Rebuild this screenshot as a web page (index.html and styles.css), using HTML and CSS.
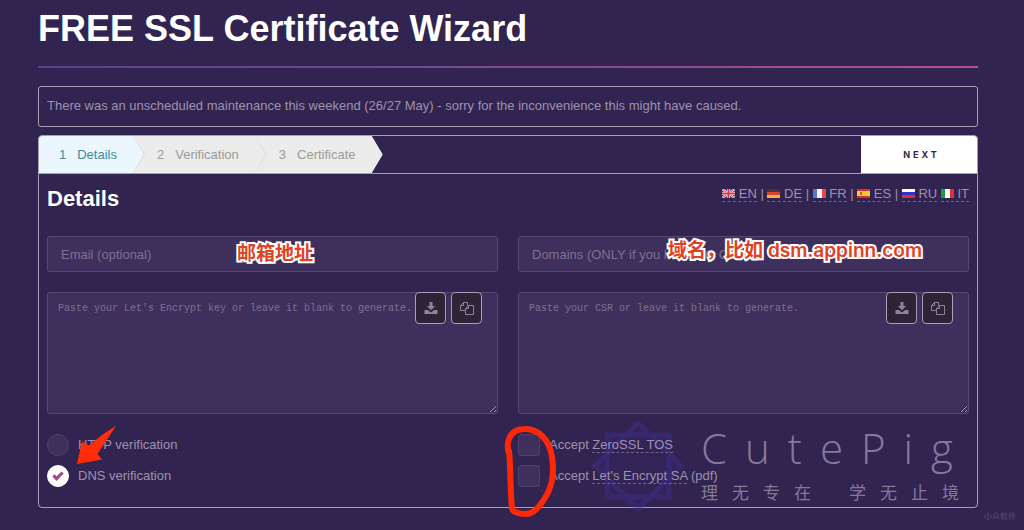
FILE: index.html
```html
<!DOCTYPE html>
<html lang="en">
<head>
	<meta charset="UTF-8">
	<title>FREE SSL Certificate Wizard</title>
	<link rel="stylesheet" href="styles.css">
</head>
<body>
	<svg class="sprite" width="0" height="0">
		<symbol id="download" viewBox="0 0 14 14">
			<path d="M5.5 1h3v4h2.7L7 9.2 2.800 5h2.700z"/>
			<path d="M.5 9h3.300L7 11.400 10.200 9h3.300v4H.5z"/>
		</symbol>
		<symbol id="copy" viewBox="0 0 14 14">
			<path fill="none" stroke="currentColor" d="M5.500 9.500h-5V4.500l3-3h4v3M3.500 1.500v3h-3M5.500 7.500l3-3h5v9h-8zM8.500 4.500v3h-3"/>
		</symbol>
	</svg>
	<main class="page">
		<h1>FREE SSL Certificate Wizard</h1>
		<p class="notice">There was an unscheduled maintenance this weekend (26/27 May) - sorry for the inconvenience this might have caused.</p>
		<form class="wizard">
			<div class="bar">
				<ol class="steps">
					<li class="on"><span>1</span>Details</li>
					<li><span>2</span>Verification</li>
					<li><span>3</span>Certificate</li>
				</ol>
				<button type="button" class="next">NEXT</button>
			</div>
			<div class="content">
				<div class="head">
					<h2>Details</h2>
					<nav class="langs">
						<a href="#en"><svg viewBox="0 0 13 9"><path fill="#3c4a94" d="M0 0h13v9H0z"/><path stroke="#fff" stroke-width="2" d="M0 0l13 9M13 0L0 9"/><path stroke="#d8485c" d="M0 0l13 9M13 0L0 9"/><path stroke="#fff" stroke-width="3" d="M6.500 0v9M0 4.500h13"/><path stroke="#d8304a" stroke-width="2" d="M6.500 0v9M0 4.500h13"/></svg> EN</a> |
						<a href="#de"><svg viewBox="0 0 13 9"><path fill="#4a3338" d="M0 0h13v3H0z"/><path fill="#d8432c" d="M0 3h13v3H0z"/><path fill="#f3b23c" d="M0 6h13v3H0z"/></svg> DE</a> |
						<a href="#fr"><svg viewBox="0 0 13 9"><path fill="#5878cc" d="M0 0h4v9H0z"/><path fill="#f2f2fa" d="M4 0h5v9H4z"/><path fill="#e5484a" d="M9 0h4v9H9z"/></svg> FR</a> |
						<a href="#es"><svg viewBox="0 0 13 9"><path fill="#dc2e24" d="M0 0h13v9H0z"/><path fill="#fbc832" d="M0 2h13v5H0z"/><path fill="#c8603c" d="M3 3h2v3H3z"/></svg> ES</a> |
						<a href="#ru"><svg viewBox="0 0 13 9"><path fill="#fff" d="M0 0h13v3H0z"/><path fill="#3038c0" d="M0 3h13v3H0z"/><path fill="#dc2c48" d="M0 6h13v3H0z"/></svg> RU</a>
						<a href="#it"><svg viewBox="0 0 13 9"><path fill="#1c9a3c" d="M0 0h4v9H0z"/><path fill="#fff" d="M4 0h5v9H4z"/><path fill="#e03030" d="M9 0h4v9H9z"/></svg> IT</a>
					</nav>
				</div>
				<div class="cols">
					<div class="field">
						<input type="text" aria-label="Email" placeholder="Email (optional)">
						<span class="tip tip-email" lang="zh-CN">邮箱地址</span>
					</div>
					<div class="field">
						<input type="text" aria-label="Domains" placeholder="Domains (ONLY if you have NO CSR)">
						<span class="tip tip-domain" lang="zh-CN">域名，比如 dsm.appinn.com</span>
					</div>
					<div class="field">
						<textarea aria-label="Let's Encrypt key" placeholder="Paste your Let's Encrypt key or leave it blank to generate."></textarea>
						<div class="tools">
							<button type="button" aria-label="Download"><svg><use href="#download"/></svg></button>
							<button type="button" aria-label="Copy"><svg><use href="#copy"/></svg></button>
						</div>
					</div>
					<div class="field">
						<textarea aria-label="CSR" placeholder="Paste your CSR or leave it blank to generate."></textarea>
						<div class="tools">
							<button type="button" aria-label="Download"><svg><use href="#download"/></svg></button>
							<button type="button" aria-label="Copy"><svg><use href="#copy"/></svg></button>
						</div>
					</div>
					<div class="options">
						<label><input type="radio" name="verify">HTTP verification</label>
						<label><input type="radio" name="verify" checked>DNS verification</label>
						<svg class="arrow" viewBox="0 0 44 42"><path d="M1 39L6 16.500 13 20.500C22 13 31 6 40 1 34 10 28 19 21.500 29l4.500 5.500z"/></svg>
					</div>
					<div class="options">
						<svg class="star" viewBox="0 0 100 100"><path d="M19 19h62v62H19zM50 7l43 43-43 43L7 50z"/></svg>
						<label><input type="checkbox"><span>Accept <a href="#tos">ZeroSSL TOS</a></span></label>
						<label><input type="checkbox"><span>Accept <a href="#sa">Let's Encrypt SA</a> (pdf)</span></label>
						<svg class="loop" viewBox="0 0 60 100"><path d="M7 32C3 20 9 8 22 8 37 7 48 20 50 36 53 54 50 66 43 77 37 87 31 93 24 93 17 93 10 91 10 87 8 68 9 50 7 30"/></svg>
						<div class="brand">
							<span class="brand-name">CutePig</span>
							<span class="brand-sub" lang="zh-CN"><span>理无专在</span><span>学无止境</span></span>
						</div>
					</div>
				</div>
			</div>
		</form>
		<p class="source" lang="zh-CN">小众软件</p>
	</main>
</body>
</html>
```

FILE: styles.css
```css
*{
	box-sizing: border-box;
	margin: 0;
	padding: 0;
}
body{
	min-height: 100vh;
	background: #322450;
	color: #9d92ae;
	font: 13px/18px "Liberation Sans", "Noto Sans CJK SC", sans-serif;
}
a{
	color: inherit;
	text-decoration: none;
	border-bottom: 1px dashed #6f628a;
}
button{
	cursor: pointer;
}
.sprite{
	position: absolute;
}
.page{
	padding: 9px 46px 0 38px;
}
h1{
	color: #fff;
	font-size: 36px;
	line-height: 40px;
	padding-bottom: 17px;
	border-bottom: 2px solid;
	border-image: linear-gradient(90deg, #59408f, #8a4a8e 60%, #b4508c) 1;
}
.notice{
	margin-top: 18px;
	padding: 10px 8px 11px;
	border: 1px solid #a79fb6;
	border-radius: 3px;
}
.wizard{
	margin-top: 8px;
	border: 1px solid #a79fb6;
	border-radius: 4px;
}
.bar{
	display: flex;
	justify-content: space-between;
	height: 38px;
	border-bottom: 1px solid #a79fb6;
}
.steps{
	display: flex;
	list-style: none;
	line-height: 37px;
	color: #9b9b9b;
}
.steps li{
	position: relative;
	padding: 0 16px 0 24px;
	background: #ececec;
}
.steps li:first-child{
	padding-left: 20px;
	border-radius: 3px 0 0 0;
}
.steps .on{
	background: #ebf6fe;
	color: #3a8da4;
}
.steps span{
	margin-right: 11px;
}
.steps li::before,
.steps li::after{
	content: "";
	position: absolute;
	z-index: 1;
	top: 0;
	left: 100%;
	width: 11px;
	height: 100%;
	background: inherit;
	clip-path: polygon(0 0, 100% 50%, 0 100%);
}
.steps li:not(:last-child)::before{
	width: 12px;
	background: #d4d4d4;
}
.next{
	width: 116px;
	padding-left: 5px;
	border: 0;
	border-radius: 0 3px 0 0;
	background: #fff;
	color: #322450;
	font: bold 9px Inter, sans-serif;
	letter-spacing: 3px;
}
.content{
	padding: 9px 8px 20px;
}
.head{
	display: flex;
	justify-content: space-between;
	align-items: flex-start;
}
h2{
	color: #fff;
	font-size: 22px;
	line-height: 32px;
}
.langs{
	line-height: 22px;
}
.langs svg{
	width: 13px;
	height: 9px;
}
.cols{
	display: grid;
	grid-template-columns: 1fr 1fr;
	gap: 20px;
	margin-top: 21px;
}
.field{
	position: relative;
}
.field input,
.field textarea{
	display: block;
	width: 100%;
	border: 1px solid #56486f;
	border-radius: 3px;
	background: #3e2f5c;
	color: #fff;
}
.field input{
	height: 36px;
	padding: 0 13px;
	font: 13px "Liberation Sans", sans-serif;
}
.field textarea{
	height: 122px;
	padding: 10px;
	font: 10px/12px "Liberation Mono", monospace;
}
.field ::placeholder{
	color: #7d7192;
}
.tools{
	position: absolute;
	top: 0;
	right: 16px;
	display: flex;
	gap: 5px;
}
.tools button{
	display: flex;
	align-items: center;
	justify-content: center;
	width: 31px;
	height: 32px;
	border: 1px solid #a79fb6;
	border-radius: 4px;
	background: #2d2438;
	color: #8d8498;
}
.tools svg{
	width: 14px;
	height: 14px;
	fill: currentColor;
}
.tip{
	position: absolute;
	color: #e0421f;
	font: 600 19px/28px Inter, "Noto Sans CJK SC", sans-serif;
	white-space: nowrap;
	-webkit-text-stroke: 4px #fff;
	stroke-linejoin: round;
	paint-order: stroke fill;
}
.tip-email{
	top: 4px;
	left: 190px;
}
.tip-domain{
	top: 1px;
	right: 47px;
}
.options{
	position: relative;
	display: flex;
	flex-direction: column;
	align-items: flex-start;
	gap: 9px;
}
.options label{
	display: flex;
	align-items: center;
	gap: 9px;
	height: 22px;
}
.options input{
	appearance: none;
	display: grid;
	place-items: center;
	width: 22px;
	height: 22px;
	border: 1px solid #4f4169;
	border-radius: 3px;
	background: #3e2f5c;
}
.options input[type=radio]{
	border-radius: 50%;
}
.options input:checked{
	border-color: #fff;
	background: #fff;
}
.options input:checked::after{
	content: "";
	width: 7px;
	height: 3px;
	margin-bottom: 3px;
	border: solid #9c4a86;
	border-width: 0 0 3px 3px;
	transform: rotate(-45deg);
}

/* hand-drawn marks */
.arrow{
	position: absolute;
	top: -9px;
	left: 29px;
	width: 44px;
	height: 42px;
	fill: #ff2d08;
}
.loop{
	position: absolute;
	top: -13px;
	left: -16px;
	width: 60px;
	height: 100px;
	fill: none;
	stroke: #fb2909;
	stroke-width: 6;
	stroke-linecap: round;
}

/* watermark */
.star{
	position: absolute;
	top: -18px;
	left: 70px;
	width: 100px;
	height: 100px;
	fill: rgba(58, 42, 140, .12);
	stroke: rgba(66, 52, 160, .35);
	stroke-width: 5;
}
.options label > span{
	position: relative;
}
.brand{
	position: absolute;
	top: -14px;
	right: 10px;
	width: 258px;
	color: #85799a;
}
.brand-name{
	display: block;
	font: 300 42px/56px "Open Sans", sans-serif;
	letter-spacing: 18px;
	white-space: nowrap;
}
.brand-sub{
	display: flex;
	justify-content: space-between;
	margin: 6px -14px 0 0;
	font-size: 17px;
	line-height: 24px;
	letter-spacing: 14px;
}
.source{
	margin-right: -38px;
	color: #5b4e72;
	font-size: 8px;
	text-align: right;
}
```
